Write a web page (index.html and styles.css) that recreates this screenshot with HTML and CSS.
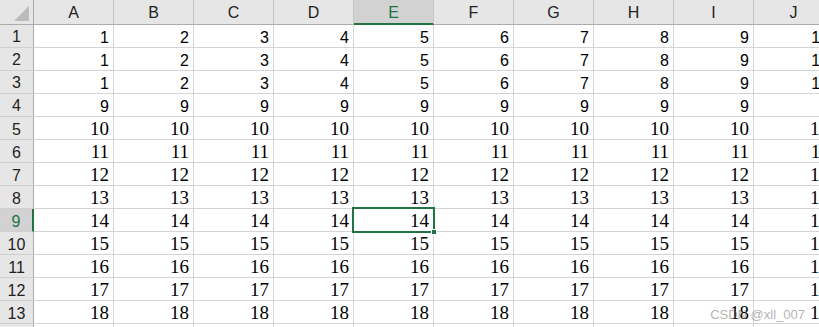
FILE: index.html
```html
<!DOCTYPE html>
<html>
	<head>
		<meta charset="UTF-8">
		<title>Sheet1</title>
		<link rel="stylesheet" href="styles.css">
	</head>
	<body>
		<div id="sheet">
			<div class="row head">
				<div class="corner"><span class="tri"></span></div>
				<div class="col">A</div><div class="col">B</div><div class="col">C</div><div class="col">D</div>
				<div class="col on">E</div><div class="col">F</div><div class="col">G</div><div class="col">H</div>
				<div class="col">I</div><div class="col">J</div>
			</div>
			<div class="row sans">
				<div class="num">1</div>
				<div class="cell">1</div><div class="cell">2</div><div class="cell">3</div><div class="cell">4</div><div class="cell">5</div>
				<div class="cell">6</div><div class="cell">7</div><div class="cell">8</div><div class="cell">9</div><div class="cell">10</div>
			</div>
			<div class="row sans">
				<div class="num">2</div>
				<div class="cell">1</div><div class="cell">2</div><div class="cell">3</div><div class="cell">4</div><div class="cell">5</div>
				<div class="cell">6</div><div class="cell">7</div><div class="cell">8</div><div class="cell">9</div><div class="cell">10</div>
			</div>
			<div class="row sans">
				<div class="num">3</div>
				<div class="cell">1</div><div class="cell">2</div><div class="cell">3</div><div class="cell">4</div><div class="cell">5</div>
				<div class="cell">6</div><div class="cell">7</div><div class="cell">8</div><div class="cell">9</div><div class="cell">10</div>
			</div>
			<div class="row sans">
				<div class="num">4</div>
				<div class="cell">9</div><div class="cell">9</div><div class="cell">9</div><div class="cell">9</div><div class="cell">9</div>
				<div class="cell">9</div><div class="cell">9</div><div class="cell">9</div><div class="cell">9</div><div class="cell"></div>
			</div>
			<div class="row serif">
				<div class="num">5</div>
				<div class="cell">10</div><div class="cell">10</div><div class="cell">10</div><div class="cell">10</div><div class="cell">10</div>
				<div class="cell">10</div><div class="cell">10</div><div class="cell">10</div><div class="cell">10</div><div class="cell">10</div>
			</div>
			<div class="row serif">
				<div class="num">6</div>
				<div class="cell">11</div><div class="cell">11</div><div class="cell">11</div><div class="cell">11</div><div class="cell">11</div>
				<div class="cell">11</div><div class="cell">11</div><div class="cell">11</div><div class="cell">11</div><div class="cell">11</div>
			</div>
			<div class="row serif">
				<div class="num">7</div>
				<div class="cell">12</div><div class="cell">12</div><div class="cell">12</div><div class="cell">12</div><div class="cell">12</div>
				<div class="cell">12</div><div class="cell">12</div><div class="cell">12</div><div class="cell">12</div><div class="cell">12</div>
			</div>
			<div class="row serif">
				<div class="num">8</div>
				<div class="cell">13</div><div class="cell">13</div><div class="cell">13</div><div class="cell">13</div><div class="cell">13</div>
				<div class="cell">13</div><div class="cell">13</div><div class="cell">13</div><div class="cell">13</div><div class="cell">13</div>
			</div>
			<div class="row serif">
				<div class="num on">9</div>
				<div class="cell">14</div><div class="cell">14</div><div class="cell">14</div><div class="cell">14</div>
				<div class="cell active">14<span class="sel"><span class="handle"></span></span></div>
				<div class="cell">14</div><div class="cell">14</div><div class="cell">14</div><div class="cell">14</div><div class="cell">14</div>
			</div>
			<div class="row serif">
				<div class="num">10</div>
				<div class="cell">15</div><div class="cell">15</div><div class="cell">15</div><div class="cell">15</div><div class="cell">15</div>
				<div class="cell">15</div><div class="cell">15</div><div class="cell">15</div><div class="cell">15</div><div class="cell">15</div>
			</div>
			<div class="row serif">
				<div class="num">11</div>
				<div class="cell">16</div><div class="cell">16</div><div class="cell">16</div><div class="cell">16</div><div class="cell">16</div>
				<div class="cell">16</div><div class="cell">16</div><div class="cell">16</div><div class="cell">16</div><div class="cell">16</div>
			</div>
			<div class="row serif">
				<div class="num">12</div>
				<div class="cell">17</div><div class="cell">17</div><div class="cell">17</div><div class="cell">17</div><div class="cell">17</div>
				<div class="cell">17</div><div class="cell">17</div><div class="cell">17</div><div class="cell">17</div><div class="cell">17</div>
			</div>
			<div class="row serif">
				<div class="num">13</div>
				<div class="cell">18</div><div class="cell">18</div><div class="cell">18</div><div class="cell">18</div><div class="cell">18</div>
				<div class="cell">18</div><div class="cell">18</div><div class="cell">18</div><div class="cell">18</div><div class="cell">18</div>
			</div>
			<div class="row serif">
				<div class="num"></div>
				<div class="cell"></div><div class="cell"></div><div class="cell"></div><div class="cell"></div><div class="cell"></div>
				<div class="cell"></div><div class="cell"></div><div class="cell"></div><div class="cell"></div><div class="cell"></div>
			</div>
			<div class="mark">CSDN @xll_007</div>
		</div>
	</body>
</html>
```

FILE: styles.css
```css
*{margin: 0;padding: 0;box-sizing: border-box;}
body{background: #fff;}
#sheet{width: 819px;height: 327px;overflow: hidden;position: relative;font-family: "Liberation Sans", Arial, sans-serif;color: #000;}
.row{display: flex;height: 23px;}
.row > div{flex: none;width: 80px;border-right: 1px solid #d4d4d4;border-bottom: 1px solid #d4d4d4;}
.row > .num, .row > .corner{width: 34px;}

.head{height: 25px;}
.head > div{background: #e6e6e6;border-bottom-color: #ababab;border-right-color: #c6c6c6;}
.head .col{text-align: center;font-size: 16px;line-height: 16px;padding-top: 5px;color: #222;}
.head .col.on{background: #d2d2d2;border-bottom: 2px solid #217346;color: #217346;}
.corner{position: relative;}
.corner .tri{position: absolute;right: 4px;bottom: 3px;width: 0;height: 0;border-left: 15px solid transparent;border-bottom: 15px solid #bcbcbc;}
.head .corner{border-right-color: #ababab;}

.num{background: #e6e6e6;text-align: center;font-size: 16px;line-height: 16px;padding-top: 4px;border-right-color: #ababab !important;border-bottom-color: #d0d0d0 !important;color: #222;}
.num.on{background: #d2d2d2;border-right: 2px solid #217346 !important;color: #217346;}

.cell{text-align: right;padding-right: 4px;white-space: nowrap;}
.sans .cell{font-size: 16px;line-height: 16px;padding-top: 5px;}
.serif .cell{font-family: "Liberation Serif", "Times New Roman", serif;font-size: 19px;line-height: 19px;padding-top: 2px;}
.serif .num{padding-top: 5px;}

.active{position: relative;}
.sel{position: absolute;left: -2px;top: -2px;right: -2px;bottom: -2px;border: 2px solid #217346;}
.handle{position: absolute;right: -4px;bottom: -4px;width: 6px;height: 6px;background: #217346;border: 1px solid #fff;}

.mark{position: absolute;right: 14px;bottom: 5px;font-size: 13px;color: rgba(100, 100, 100, 0.5);}
```
